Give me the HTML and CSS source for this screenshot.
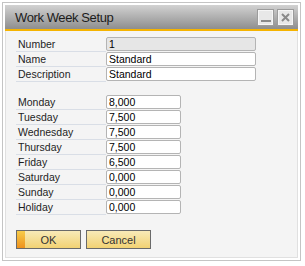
FILE: index.html
```html
<!DOCTYPE html>
<html lang="en">
<head>
    <meta charset="UTF-8">
    <title>Work Week Setup</title>
    <link rel="stylesheet" href="styles.css">
</head>
<body>
    <div class="window">
        <div class="titlebar">
            <span class="title">Work Week Setup</span>
            <div class="winButtons">
                <div class="winBtn minBtn"><span class="dash"></span></div>
                <div class="winBtn closeBtn">
                    <svg width="11" height="11" viewBox="0 0 11 11">
                        <path d="M2 2 L9 9 M9 2 L2 9" stroke="#8a8a8a" stroke-width="2"/>
                    </svg>
                </div>
            </div>
        </div>

        <div class="panel">
            <div class="group">
                <div class="row"><span class="label">Number</span><span class="field wide disabled">1</span></div>
                <div class="row"><span class="label">Name</span><span class="field wide">Standard</span></div>
                <div class="row"><span class="label">Description</span><span class="field wide">Standard</span></div>
            </div>

            <div class="group days">
                <div class="row"><span class="label">Monday</span><span class="field">8,000</span></div>
                <div class="row"><span class="label">Tuesday</span><span class="field">7,500</span></div>
                <div class="row"><span class="label">Wednesday</span><span class="field">7,500</span></div>
                <div class="row"><span class="label">Thursday</span><span class="field">7,500</span></div>
                <div class="row"><span class="label">Friday</span><span class="field">6,500</span></div>
                <div class="row"><span class="label">Saturday</span><span class="field">0,000</span></div>
                <div class="row"><span class="label">Sunday</span><span class="field">0,000</span></div>
                <div class="row"><span class="label">Holiday</span><span class="field">0,000</span></div>
            </div>

            <div class="actions">
                <button class="btn primary">OK</button>
                <button class="btn">Cancel</button>
            </div>
        </div>
    </div>
</body>
</html>
```

FILE: styles.css
```css
body {
    margin: 0;
    background: #ffffff;
    font-family: "Liberation Sans", Arial, sans-serif;
    color: #1e1e1e;
}

.window {
    margin: 2px;
    width: 299px;
    height: 259px;
    box-sizing: border-box;
    border: 1px solid #c4c4c4;
    padding: 2px;
    background: #ffffff;
    display: flex;
    flex-direction: column;
}

.titlebar {
    height: 24px;
    background: linear-gradient(#d2d2d2, #8e8e8e);
    border-bottom: 2px solid #f5b300;
    display: flex;
    align-items: center;
    justify-content: space-between;
    padding-left: 10px;
    padding-right: 4px;
}

.title {
    font-size: 13px;
    letter-spacing: -0.4px;
    color: #1c1c1c;
    padding-top: 1px;
}

.winButtons {
    display: flex;
    gap: 3px;
}

.winBtn {
    width: 17px;
    height: 17px;
    box-sizing: border-box;
    border: 1px solid #9c9c9c;
    background: #e8e8e8;
    box-shadow: inset 0 0 0 1px #f6f6f6;
    display: flex;
    align-items: center;
    justify-content: center;
}

.minBtn {
    align-items: flex-end;
    padding-bottom: 3px;
}

.dash {
    width: 10px;
    height: 2px;
    background: #8a8a8a;
}

.panel {
    flex: 1;
    background: #f4f4f4;
    border: 1px solid #e0e0e0;
    border-top: none;
    padding: 6px 0 0 10px;
}

.group.days {
    margin-top: 13px;
}

.row {
    display: flex;
    height: 15px;
}

.label {
    width: 90px;
    box-sizing: border-box;
    padding-left: 2px;
    font-size: 10.5px;
    line-height: 14px;
    border-bottom: 1px solid #d9dee6;
}

.field {
    width: 75px;
    height: 14px;
    box-sizing: border-box;
    border: 1px solid #b4b4b4;
    border-radius: 2px;
    background: #ffffff;
    padding-left: 2px;
    font-size: 10.5px;
    line-height: 12px;
    color: #000000;
}

.field.wide {
    width: 150px;
}

.field.disabled {
    background: #e6e6e6;
}

.actions {
    display: flex;
    gap: 5px;
    margin-top: 15px;
}

.btn {
    width: 65px;
    height: 19px;
    border: 1px solid #6a6a6a;
    background: linear-gradient(#f8eab8, #f2d273);
    font-family: "Liberation Sans", Arial, sans-serif;
    font-size: 11px;
    color: #333333;
    padding: 0;
}

.btn.primary {
    background:
        linear-gradient(#f7cc4a, #ef921c) left / 8px 100% no-repeat,
        linear-gradient(#f8eab8, #f2d273);
}
```
